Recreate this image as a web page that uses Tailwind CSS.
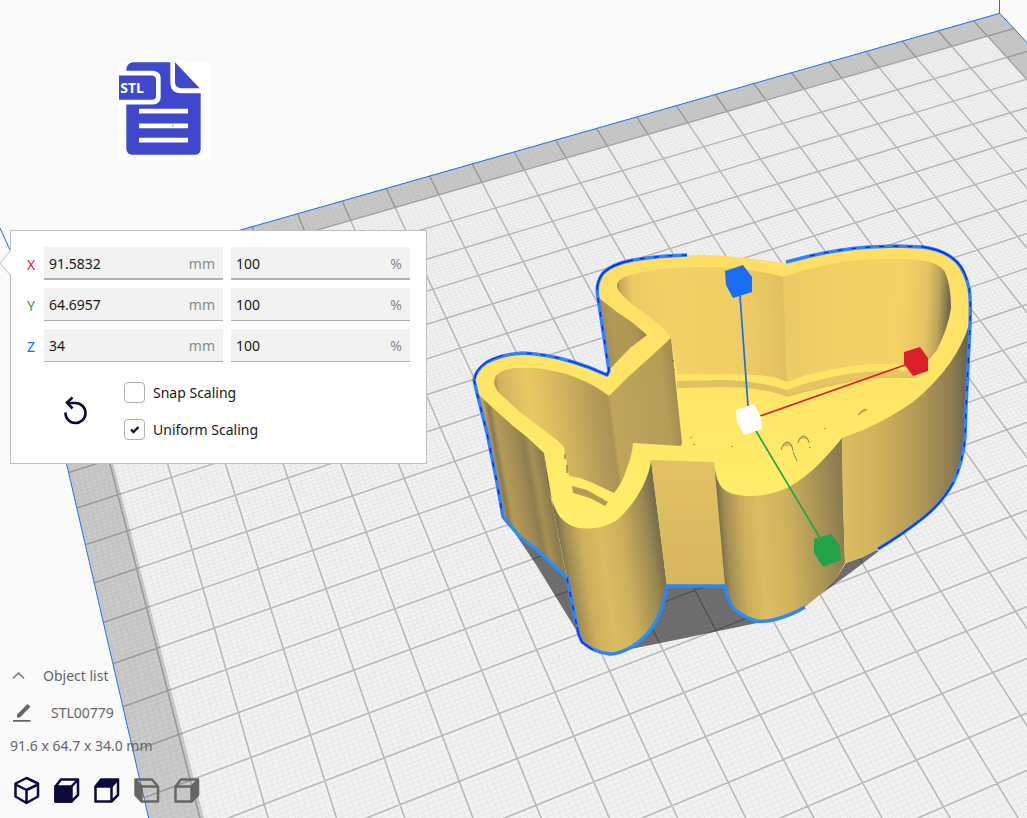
<!DOCTYPE html>
<html lang="en">
<head>
    <meta charset="UTF-8">
    <meta name="viewport" content="width=device-width, initial-scale=1.0">
    <title>STL00779 - Scale</title>
    <script src="https://cdn.jsdelivr.net/npm/@tailwindcss/browser@4"></script>
</head>
<body class="bg-[#fafafa] font-['Noto_Sans',sans-serif] text-sm text-[#191919]">
<main class="relative flex min-h-screen flex-col items-start overflow-hidden">

    <!-- 3D view -->
    <svg class="absolute inset-0 h-full w-full" viewBox="0 0 1027 818" preserveAspectRatio="xMinYMin slice" aria-label="Build plate">
        <defs>
            <linearGradient id="top" gradientUnits="userSpaceOnUse" x1="0" y1="245" x2="0" y2="530">
                <stop offset="0" stop-color="#ffde66"/><stop offset="0.5" stop-color="#ffe566"/><stop offset="1" stop-color="#fff06a"/>
            </linearGradient>
            <linearGradient id="wallLeft" gradientUnits="userSpaceOnUse" x1="482" y1="450" x2="562" y2="436">
                <stop offset="0" stop-color="#d0b05e"/><stop offset="0.06" stop-color="#7d7050"/><stop offset="0.1" stop-color="#c2a65a"/>
                <stop offset="0.17" stop-color="#8a7a50"/><stop offset="0.23" stop-color="#b39a56"/><stop offset="0.4" stop-color="#a38d52"/>
                <stop offset="0.52" stop-color="#8f7d4f"/><stop offset="0.6" stop-color="#a69053"/><stop offset="0.72" stop-color="#8d7b4d"/>
                <stop offset="0.85" stop-color="#ab9455"/><stop offset="1" stop-color="#8d7b4e"/>
            </linearGradient>
            <linearGradient id="cylA" gradientUnits="userSpaceOnUse" x1="558" y1="560" x2="664" y2="544">
                <stop offset="0" stop-color="#66604c"/><stop offset="0.1" stop-color="#a08c52"/><stop offset="0.25" stop-color="#ceb05c"/>
                <stop offset="0.42" stop-color="#dabc61"/><stop offset="0.62" stop-color="#cdb05c"/><stop offset="0.85" stop-color="#9f8b52"/><stop offset="1" stop-color="#70674e"/>
            </linearGradient>
            <linearGradient id="flat" gradientUnits="userSpaceOnUse" x1="0" y1="460" x2="0" y2="588">
                <stop offset="0" stop-color="#e2c263"/><stop offset="1" stop-color="#d6b65f"/>
            </linearGradient>
            <linearGradient id="cylB" gradientUnits="userSpaceOnUse" x1="718" y1="540" x2="844" y2="530">
                <stop offset="0" stop-color="#6b644d"/><stop offset="0.07" stop-color="#a08c52"/><stop offset="0.2" stop-color="#ccae5b"/>
                <stop offset="0.33" stop-color="#dcbd62"/><stop offset="0.55" stop-color="#d0b25d"/><stop offset="0.8" stop-color="#ab9555"/><stop offset="1" stop-color="#8b7b4f"/>
            </linearGradient>
            <linearGradient id="wallRight" gradientUnits="userSpaceOnUse" x1="843" y1="470" x2="973" y2="470">
                <stop offset="0" stop-color="#dcbd62"/><stop offset="0.3" stop-color="#ceb05c"/><stop offset="0.6" stop-color="#b09856"/>
                <stop offset="0.85" stop-color="#8a7b50"/><stop offset="1" stop-color="#5f5a4b"/>
            </linearGradient>
            <linearGradient id="notch" gradientUnits="userSpaceOnUse" x1="600" y1="330" x2="646" y2="322">
                <stop offset="0" stop-color="#a08b52"/><stop offset="0.3" stop-color="#b29a56"/><stop offset="0.75" stop-color="#ad9555"/><stop offset="1" stop-color="#8c7a4c"/>
            </linearGradient>
            <linearGradient id="innerA" gradientUnits="userSpaceOnUse" x1="494" y1="410" x2="676" y2="386">
                <stop offset="0" stop-color="#8c7b50"/><stop offset="0.05" stop-color="#d2b25e"/><stop offset="0.2" stop-color="#eac963"/>
                <stop offset="0.38" stop-color="#d3b45e"/><stop offset="0.55" stop-color="#b39a57"/><stop offset="0.62" stop-color="#ab9354"/>
                <stop offset="0.64" stop-color="#c0a55a"/><stop offset="0.82" stop-color="#b9a059"/><stop offset="0.93" stop-color="#b79e58"/><stop offset="1" stop-color="#a18c51"/>
            </linearGradient>
            <linearGradient id="innerB" gradientUnits="userSpaceOnUse" x1="616" y1="300" x2="784" y2="292">
                <stop offset="0" stop-color="#8c7b50"/><stop offset="0.03" stop-color="#c7aa5b"/><stop offset="0.1" stop-color="#ebca63"/><stop offset="0.3" stop-color="#f3d166"/>
                <stop offset="0.7" stop-color="#f0ce64"/><stop offset="0.9" stop-color="#e6c563"/><stop offset="1" stop-color="#dfbf62"/>
            </linearGradient>
            <linearGradient id="innerC" gradientUnits="userSpaceOnUse" x1="784" y1="310" x2="951" y2="318">
                <stop offset="0" stop-color="#ebca64"/><stop offset="0.3" stop-color="#f2d065"/><stop offset="0.7" stop-color="#f4d266"/><stop offset="0.85" stop-color="#e4c363"/>
                <stop offset="0.92" stop-color="#bfa459"/><stop offset="1" stop-color="#5f5a4b"/>
            </linearGradient>
        </defs>

        <!-- plate and grid, filled in by drawPlate() -->
        <path id="plate" fill="#f2f2f2"/>
        <path id="minor" fill="none" stroke="#e5e5e5" stroke-width="0.9"/>
        <path id="major" fill="none" stroke="#b9b9b9" stroke-width="1.6"/>
        <path id="border" fill="#000" fill-opacity="0.165" fill-rule="evenodd"/>
        <path id="edge" fill="none" stroke="#1f6fe8" stroke-width="1"/>
        <path d="M0 228 10 250M999.5 0V13" fill="none" stroke="#1f6fe8"/>

        <!-- shadow -->
        <path d="M506 520 535 563 578 633 600 654 631 649 690 637 757 623 790 615 824 592 850 573 879 551 800 520 600 500Z" fill="#000" fill-opacity="0.54"/>

        <!-- model -->
        <path fill="url(#top)" d="M474 380Q475 371 487 362 503 354 523 353 547 354 573 362 590 367 607 375L609 371 598 298Q595 284 603 273 612 264 633 260 656 256 687 255 712 254 737 257 762 260 784 263L810 256Q840 249 870 247L897 246 923 247Q945 250 957 262 965 271 969 288 971 300 970 325L966 408 965 437Q963 462 953 483 942 503 923 518 903 534 878 549L863 557 846 563 837 577 823 592 805 607Q790 616 773 620 764 622 757 621 744 618 733 608 727 600 725 587H667Q664 604 657 620 647 638 630 648 618 654 610 654 593 652 582 642 578 635 577 627L567 578 537 550 520 537 503 517 497 483 487 433Z"/>
        <path fill="url(#wallLeft)" d="M476 392 493 408 513 426 527 437 544 453 547 483 553 507 567 579 537 550 520 537 503 517 497 483 487 433Z"/>
        <path fill="url(#cylA)" d="M544 453 547 483Q551 500 555 508 559 519 570 525 580 530 594 528 606 527 617 520 631 508 642 488 650 472 651 460L667 586Q664 604 657 620 647 638 630 648 618 654 610 654 593 652 582 642 578 635 577 627L567 578 553 507Z"/>
        <path fill="url(#flat)" d="M651 460 714 462 725 587H667Z"/>
        <path fill="url(#cylB)" d="M714 462Q715 476 720 485 727 496 750 496 769 496 787 488 804 479 820 463L833 449 842 438 843 500 845 563 837 577 823 592 805 607Q790 616 773 620 764 622 757 621 744 618 733 608 727 600 725 587Z"/>
        <path fill="url(#wallRight)" d="M842 438 863 430Q890 418 913 402 935 384 950 363 962 346 969 325L966 408 965 437Q963 462 953 483 942 503 923 518 903 534 878 549L863 557 845 563 843 500Z"/>
        <path fill="url(#notch)" d="M599 298 617 312 633 323 647 335 630 348 610 369Z"/>

        <!-- cavities -->
        <path fill="url(#innerA)" d="M494 382Q495 373 505 370 515 367 527 368 542 368 553 371 566 373 577 378 595 385 609 396L627 378 647 360 671 338 682 443 681 446 633 443Q632 456 627 468 622 484 614 493L593 483 580 478 569 476 564 447 557 440 533 422 520 412 507 400Q494 390 494 382Z"/>
        <path fill="#b39a56" d="M572 486 587 490 608 502 605 506 590 498 573 493Z"/>
        <path fill="url(#innerB)" d="M617 287Q616 279 630 275 656 268 690 267H723Q755 269 784 277L787 382 777 378Q760 374 723 374L677 374 671 338 665 330 650 317 633 305 622 295Q618 291 617 287Z"/>
        <path fill="url(#innerC)" d="M783 277Q806 269 830 264 857 259 883 259L907 259Q938 260 945 272 951 286 951 308 948 328 937 350L928 361 913 364H870Q848 366 830 370 806 374 787 382Z"/>
        <path fill="#dfc063" d="M677 381 723 380Q760 381 787 390 806 382 847 374 878 370 915 371L917 378 880 378Q840 382 787 397 762 387 723 387L677 388Z"/>
        <path fill="#edcc65" d="M787 390Q806 382 847 374 878 370 915 371L914 376 880 377Q840 380 787 395Z" opacity="0.5"/>
        <path fill="none" stroke="#5f5740" d="M673 360v2M674 369v1M565 454v5M567 465v8M691 437v1M694 444v1M732 446v1M825 428v1M810 447v1"/>

        <!-- engraved marks -->
        <path fill="#dcb963" d="M782 448Q783 442 788 442 792 443 793 449L790 446H785ZM798 441Q800 436 804 436 808 437 809 442L806 439H801ZM858 415Q861 409 869 409L865 412Z"/>
        <path fill="none" stroke="#7d6e46" stroke-width="0.8" d="M781 450Q783 442 788 442 792 443 793 451M798 443Q800 436 804 436 808 437 809 443M793 452 797 461M858 415Q861 410 866 409"/>

        <!-- selection outline -->
        <g fill="none" stroke-linejoin="round">
            <g stroke="#2f83fb" stroke-width="3.4">
                <path d="M687 255Q656 256 633 260 612 264 603 273 595 284 598 298L609 371 607 375Q590 367 573 362 547 354 523 353 503 354 487 362 475 371 474 380L477 393 487 433 497 483 503 517 520 537 537 550 567 578 577 627Q578 635 582 642 593 652 610 654 618 654 630 648 647 638 657 620 664 604 667 586H725Q727 600 733 608 744 618 757 621 764 622 773 620 790 616 805 607"/>
                <path d="M786 262 810 256Q840 249 870 247L897 246 923 247Q945 250 957 262 965 271 969 288 971 300 970 325L966 408 965 437Q963 462 953 483 942 503 923 518 903 534 878 549"/>
            </g>
            <g stroke="#0a22f5" stroke-width="1.3">
                <path stroke-dasharray="5 9" d="M687 255Q656 256 633 260M598 298 609 371M573 362Q547 354 523 353M474 380 477 393 487 433 497 483 503 517M567 578 577 627M810 256Q840 249 870 247L897 246 923 247M969 288Q971 300 970 325L966 408 965 437Q963 462 953 483"/>
                <path d="M633 260Q612 264 603 273 597 281 597 290M609 371 607 375Q590 367 573 362M503 355Q475 364 475 379M923 247Q945 250 957 262 964 269 967 280M953 483Q942 503 923 518 903 534 878 549M577 627Q578 635 582 642L593 650"/>
            </g>
            <path stroke="#0fa4ff" stroke-width="1.3" d="M510 526 520 537 537 550 567 578M630 648Q647 638 657 620M733 608Q744 618 757 621"/>
        </g>

        <!-- scale handles -->
        <g fill="none" stroke-width="1.7">
            <path stroke="#186df0" d="M740 296 748 406"/>
            <path stroke="#db1f2a" d="M760 416 905 365"/>
            <path stroke="#22a34a" d="M756 431 820 538"/>
        </g>
        <path fill="#186df0" d="M725 271 743 265 752 277V292L733 298 726 285Z"/>
        <path fill="#fff" d="M736 410 754 404 761 417 762 429 744 435 737 422Z"/>
        <path fill="#db1f2a" d="M904 352 920 347 928 358V371L913 376 904 364Z"/>
        <path fill="#22a34a" d="M814 539 831 534 840 546 841 560 823 567 814 553Z"/>
    </svg>

    <!-- STL file badge -->
    <svg class="relative mt-[62px] ml-[119px] h-[98px] w-[91px] bg-white" viewBox="57 37 273 293" aria-label="STL file">
        <path fill="#3f48cc" d="M97 37H211V100Q213 129 240 130H302V298Q300 314 286 315H96Q81 313 79 298V164H158Q182 162 182 142V82Q180 65 160 63H79Q79 40 97 37Z"/>
        <path fill="#3f48cc" d="M225 37 299 115H242Q226 113 225 98ZM57 77H156Q168 78 168 90V140Q167 150 156 150H57Z"/>
        <path stroke="#fff" stroke-width="14" d="M117 184H264M117 228H264M117 271H264"/>
        <path fill="#777" d="M217 225h3v5h-3z"/>
        <text x="61" y="130" font-family="Noto Sans, sans-serif" font-weight="700" font-size="42" fill="#fff">STL</text>
    </svg>

    <!-- Scale tool panel -->
    <form class="relative mt-[70px] ml-[10px] w-[417px] border border-[#c0c0c0] bg-white px-4 pt-4 pb-[23px]">
        <svg class="absolute top-[18px] -left-[11px] h-[28px] w-[12px]" viewBox="0 0 12 28" aria-hidden="true">
            <path d="M12 1 1 14 12 27Z" fill="#fff"/>
            <path d="M11 1 0 14 11 27" fill="none" stroke="#c0c0c0"/>
        </svg>
        <div class="flex flex-col gap-2">
            <div class="flex h-[33px] items-center">
                <label for="x-size" class="w-[17px] pt-0.5 text-[#e5232f]">X</label>
                <div class="mr-2 flex h-full min-w-0 flex-1 items-center border-b-2 border-[#b0b0b0] bg-[#f2f2f2] pt-0.5 pr-2 pl-[5px]">
                    <input id="x-size" type="text" value="91.5832" class="min-w-0 flex-1 outline-none"><span class="text-[#8a8a8a]">mm</span>
                </div>
                <div class="flex h-full min-w-0 flex-1 items-center border-b-2 border-[#b0b0b0] bg-[#f2f2f2] pt-0.5 pr-2 pl-[5px]">
                    <input type="text" value="100" aria-label="X percent" class="min-w-0 flex-1 outline-none"><span class="text-[#8a8a8a]">%</span>
                </div>
            </div>
            <div class="flex h-[33px] items-center">
                <label for="y-size" class="w-[17px] pt-0.5 text-[#22a34a]">Y</label>
                <div class="mr-2 flex h-full min-w-0 flex-1 items-center border-b border-[#b0b0b0] bg-[#f2f2f2] pt-0.5 pr-2 pl-[5px]">
                    <input id="y-size" type="text" value="64.6957" class="min-w-0 flex-1 outline-none"><span class="text-[#8a8a8a]">mm</span>
                </div>
                <div class="flex h-full min-w-0 flex-1 items-center border-b border-[#b0b0b0] bg-[#f2f2f2] pt-0.5 pr-2 pl-[5px]">
                    <input type="text" value="100" aria-label="Y percent" class="min-w-0 flex-1 outline-none"><span class="text-[#8a8a8a]">%</span>
                </div>
            </div>
            <div class="flex h-[33px] items-center">
                <label for="z-size" class="w-[17px] pt-0.5 text-[#186df0]">Z</label>
                <div class="mr-2 flex h-full min-w-0 flex-1 items-center border-b border-[#b0b0b0] bg-[#f2f2f2] pt-0.5 pr-2 pl-[5px]">
                    <input id="z-size" type="text" value="34" class="min-w-0 flex-1 outline-none"><span class="text-[#8a8a8a]">mm</span>
                </div>
                <div class="flex h-full min-w-0 flex-1 items-center border-b border-[#b0b0b0] bg-[#f2f2f2] pt-0.5 pr-2 pl-[5px]">
                    <input type="text" value="100" aria-label="Z percent" class="min-w-0 flex-1 outline-none"><span class="text-[#8a8a8a]">%</span>
                </div>
            </div>
        </div>

        <div class="mt-5 flex items-center">
            <button type="reset" aria-label="Reset" class="mr-8 ml-[33px] h-8 w-8">
                <svg class="h-8 w-8" viewBox="0 0 32 32" fill="none" stroke="#0b0b3b" stroke-width="2.6">
                    <path d="M5.500 17.500A10 10 0 1 0 15.500 8H7.500"/>
                    <path d="M12.500 2.500 7 7.500 12.500 13.500"/>
                </svg>
            </button>
            <div class="flex flex-col gap-4">
                <label class="flex h-[21px] items-center gap-2">
                    <span class="relative h-[21px] w-[21px]">
                        <input id="snap" type="checkbox" class="peer block h-[21px] w-[21px] appearance-none rounded border border-[#b0b0b0] bg-white">
                        <svg class="absolute inset-0 hidden peer-checked:block" viewBox="0 0 21 21" fill="none" stroke="#14142e" stroke-width="2.4"><path d="M7 10.500 9.500 13 14.500 8"/></svg>
                    </span>
                    Snap Scaling
                </label>
                <label class="flex h-[21px] items-center gap-2">
                    <span class="relative h-[21px] w-[21px]">
                        <input id="uniform" type="checkbox" checked class="peer block h-[21px] w-[21px] appearance-none rounded border border-[#b0b0b0] bg-white">
                        <svg class="absolute inset-0 hidden peer-checked:block" viewBox="0 0 21 21" fill="none" stroke="#14142e" stroke-width="2.4"><path d="M7 10.500 9.500 13 14.500 8"/></svg>
                    </span>
                    Uniform Scaling
                </label>
            </div>
        </div>
    </form>

    <!-- Object info -->
    <footer class="relative mt-auto flex flex-col items-start pb-3 pl-2.5 text-[#666]">
        <button class="flex h-6 items-center">
            <svg class="mr-4 h-[17px] w-[17px]" viewBox="0 0 17 17" fill="none" stroke="#808080" stroke-width="1.7"><path d="M3 10.500 8.500 5 14 10.500"/></svg>
            Object list
        </button>
        <button class="mt-[13px] flex h-6 items-center">
            <svg class="mr-[17px] h-6 w-6" viewBox="0 0 24 24" fill="#666"><path d="M3 19h17.500v1.700H3zM7 16.500V13.500L17.500 3 20.500 5.500 10 16.500Z"/></svg>
            STL00779
        </button>
        <p class="mt-[9px] h-6 leading-6">91.6 x 64.7 x 34.0 mm</p>
        <div class="mt-4 flex gap-2">
            <button aria-label="3D view" class="h-8 w-8">
                <svg viewBox="0 0 32 32" fill="none" stroke="#0b0b3b" stroke-width="2.500" stroke-linejoin="round"><path d="M16.500 4 28 9.500V22.500L16.500 29 5.500 22.500V9.500ZM5.500 10.500 16.500 16 28 10.500M16.500 16V28"/></svg>
            </button>
            <button aria-label="Front view" class="h-8 w-8">
                <svg viewBox="0 0 32 32" fill="none" stroke="#0b0b3b" stroke-width="2.500" stroke-linejoin="round"><path d="M5.500 12.500 11 5.500H28V21L21.500 27.500H5.500Z"/><path fill="#0b0b3b" d="M5.500 12.500H21.500V27.500H5.500Z"/><path d="M21.500 12.500 28 5.500"/></svg>
            </button>
            <button aria-label="Top view" class="h-8 w-8">
                <svg viewBox="0 0 32 32" fill="none" stroke="#0b0b3b" stroke-width="2.500" stroke-linejoin="round"><path d="M5.500 12.500V27.500H21.500L28 21V5.500M21.500 12.500V27.500"/><path fill="#0b0b3b" d="M5.500 12.500 11 5.500H28L21.500 12.500Z"/></svg>
            </button>
            <button aria-label="Left view" class="h-8 w-8">
                <svg viewBox="0 0 32 32" fill="none" stroke="#666" stroke-width="2.500" stroke-linejoin="round"><path d="M5.500 5.500H22L28 12.500V27.500H11.500M11.500 12.500H28"/><path fill="#666" d="M5.500 5.500 11.500 12.500V27.500L5.500 21Z"/></svg>
            </button>
            <button aria-label="Right view" class="h-8 w-8">
                <svg viewBox="0 0 32 32" fill="none" stroke="#666" stroke-width="2.500" stroke-linejoin="round"><path d="M28 5.500H11L5.500 12.500V27.500H21.500M5.500 12.500H21.500"/><path fill="#666" d="M28 5.500 21.500 12.500V27.500L28 21Z"/></svg>
            </button>
        </div>
    </footer>
</main>

<script>
    // Plate is 235 x 235 mm, u runs along the back edge, v towards the front
    const SIZE = 235;

    function project(u, v) {
        const w = 1 - 0.000684 * u - 0.001363 * v;
        const x = (999.7 - 4.159 * u + 0.52 * v) / w;
        const y = (13.3 + 0.983 * u + 2.005 * v) / w;
        return x.toFixed(1) + ' ' + y.toFixed(1);
    }

    function rect(u1, v1, u2, v2) {
        return 'M' + project(u1, v1) + 'L' + project(u2, v1) + 'L' + project(u2, v2) + 'L' + project(u1, v2) + 'Z';
    }

    function gridLines(start, step) {
        let d = '';
        for (let p = start; p < SIZE; p += step) {
            d += 'M' + project(p, 0) + 'L' + project(p, SIZE);
            d += 'M' + project(0, p) + 'L' + project(SIZE, p);
        }
        return d;
    }

    function drawPlate() {
        document.getElementById('plate').setAttribute('d', rect(0, 0, SIZE, SIZE));
        document.getElementById('minor').setAttribute('d', gridLines(0.5, 1));
        document.getElementById('major').setAttribute('d', gridLines(7.5, 10));
        document.getElementById('border').setAttribute('d', rect(0, 0, SIZE, SIZE) + rect(7.5, 7.5, 226.9, 227.5));
        document.getElementById('edge').setAttribute('d', rect(0, 0, SIZE, SIZE));
    }

    drawPlate();
</script>
</body>
</html>
